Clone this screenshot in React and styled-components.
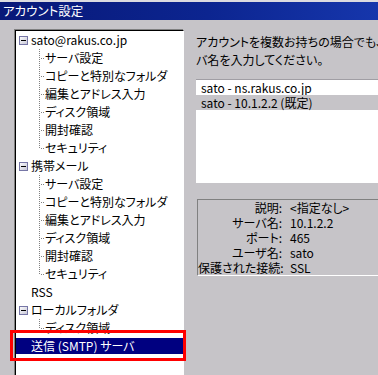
import React from "react";
import styled, { createGlobalStyle } from "styled-components";

const GlobalStyle = createGlobalStyle`
  html, body {
    margin: 0;
    padding: 0;
    overflow: hidden;
    background: #c6c4c8;
  }
  body {
    font-family: "Noto Sans CJK JP", "Noto Sans", sans-serif;
    font-size: 12px;
    font-feature-settings: "palt";
    color: #000;
  }
`;

const Window = styled.div`
  width: 378px;
  height: 375px;
  overflow: hidden;
  background: #c6c4c8;
  display: flex;
  flex-direction: column;
`;

const TitleBar = styled.div`
  height: 18px;
  border-top: 2px solid #dcdbe0;
  background: linear-gradient(90deg, #081878 0%, #0c2590 55%, #1636ac 100%);
  display: flex;
  align-items: center;
  padding-left: 3px;
  flex: none;
`;

const TitleText = styled.span`
  color: #fff;
  font-size: 12.5px;
  line-height: 18px;
  white-space: nowrap;
`;

const Body = styled.div`
  display: flex;
  align-items: flex-start;
  padding: 10px 0 0 15px;
  flex: 1;
`;

const TreePane = styled.div`
  flex: none;
  width: 167px;
  height: 360px;
  background: #fff;
  border-top: 1px solid #000;
  border-left: 1px solid #000;
  border-right: 1px solid #fff;
  box-shadow: -1px -1px 0 #808080;
  display: flex;
  flex-direction: column;
`;

const Row = styled.div`
  position: relative;
  height: 18px;
  display: flex;
  align-items: center;
  padding-left: ${(p) => p.$indent}px;
  ${(p) =>
    p.$selected &&
    `
    height: 16px;
    padding-top: 1px;
    padding-bottom: 1px;
    background: linear-gradient(#fff 0 1px, #000080 1px calc(100% - 1px), #fff calc(100% - 1px));
    color: #fff;
  `}
`;

const Label = styled.span`
  white-space: nowrap;
  line-height: 18px;
`;

const ExpanderBox = styled.svg`
  flex: none;
  width: 9px;
  height: 9px;
  margin-right: 3px;
`;

const ConnectorSvg = styled.svg`
  flex: none;
  width: 6px;
  height: 18px;
`;

const Annotation = styled.div`
  position: absolute;
  left: -6px;
  right: -3px;
  top: -7px;
  bottom: -6px;
  border: 3px solid #ff0000;
  pointer-events: none;
`;

const RightPane = styled.div`
  margin-left: 12px;
  display: flex;
  flex-direction: column;
  flex: none;
  width: 320px;
`;

const Description = styled.div`
  padding-top: 3px;
  line-height: 18px;
  white-space: nowrap;
`;

const ListBox = styled.div`
  margin-top: 10px;
  height: 103px;
  background: #fff;
  border-top: 1px solid #a09ea4;
  display: flex;
  flex-direction: column;
`;

const ListItem = styled.div`
  height: 15px;
  line-height: 15px;
  padding-left: 5px;
  white-space: nowrap;
  background: ${(p) => (p.$selected ? "#c6c4c8" : "#fff")};
`;

const InfoPanel = styled.div`
  margin-top: 16px;
  margin-left: 1px;
  border-top: 1px solid #808080;
  border-left: 1px solid #808080;
  border-bottom: 1px solid #fff;
  display: grid;
  grid-template-columns: 84px 1fr;
  column-gap: 8px;
  grid-auto-rows: 15px;
`;

const InfoLabel = styled.div`
  text-align: right;
  line-height: 15px;
  white-space: nowrap;
`;

const InfoValue = styled.div`
  line-height: 15px;
  white-space: nowrap;
`;

function Expander() {
  return (
    <ExpanderBox viewBox="0 0 9 9">
      <defs>
        <linearGradient id="exg" x1="0" y1="0" x2="1" y2="1">
          <stop offset="0" stopColor="#ffffff" />
          <stop offset="1" stopColor="#c4c4d4" />
        </linearGradient>
      </defs>
      <rect x="0.5" y="0.5" width="8" height="8" fill="url(#exg)" stroke="#7676a6" />
      <rect x="2" y="4" width="5" height="1" fill="#000" />
    </ExpanderBox>
  );
}

function Connector({ last }) {
  return (
    <ConnectorSvg viewBox="0 0 6 18">
      <line
        x1="0.5"
        y1="0"
        x2="0.5"
        y2={last ? 9 : 18}
        stroke="#808080"
        strokeWidth="1"
        strokeDasharray="1 1"
      />
      <line x1="2" y1="9.5" x2="6" y2="9.5" stroke="#808080" strokeWidth="1" strokeDasharray="1 1" />
    </ConnectorSvg>
  );
}

const accountChildren = [
  "サーバ設定",
  "コピーと特別なフォルダ",
  "編集とアドレス入力",
  "ディスク領域",
  "開封確認",
  "セキュリティ",
];

const tree = [
  { label: "sato@rakus.co.jp", children: accountChildren },
  { label: "携帯メール", children: accountChildren },
  { label: "RSS" },
  { label: "ローカルフォルダ", children: ["ディスク領域"] },
  { label: "送信 (SMTP) サーバ", selected: true },
];

const info = [
  ["説明:", "<指定なし>"],
  ["サーバ名:", "10.1.2.2"],
  ["ポート:", "465"],
  ["ユーザ名:", "sato"],
  ["保護された接続:", "SSL"],
];

export default function App() {
  return (
    <>
      <GlobalStyle />
      <Window>
        <TitleBar>
          <TitleText>アカウント設定</TitleText>
        </TitleBar>
        <Body>
          <TreePane>
            {tree.map((node, i) => (
              <React.Fragment key={i}>
                {node.children ? (
                  <Row $indent={3}>
                    <Expander />
                    <Label>{node.label}</Label>
                  </Row>
                ) : (
                  <Row $indent={15} $selected={node.selected}>
                    <Label>{node.label}</Label>
                    {node.selected && <Annotation />}
                  </Row>
                )}
                {node.children &&
                  node.children.map((c, j) => (
                    <Row key={j} $indent={23}>
                      <Connector last={j === node.children.length - 1} />
                      <Label>{c}</Label>
                    </Row>
                  ))}
              </React.Fragment>
            ))}
          </TreePane>
          <RightPane>
            <Description>
              アカウントを複数お持ちの場合でも、設定するサー
              <br />
              バ名を入力してください。
            </Description>
            <ListBox>
              <ListItem>sato - ns.rakus.co.jp</ListItem>
              <ListItem $selected>sato - 10.1.2.2 (既定)</ListItem>
            </ListBox>
            <InfoPanel>
              {info.map(([k, v]) => (
                <React.Fragment key={k}>
                  <InfoLabel>{k}</InfoLabel>
                  <InfoValue>{v}</InfoValue>
                </React.Fragment>
              ))}
            </InfoPanel>
          </RightPane>
        </Body>
      </Window>
    </>
  );
}
